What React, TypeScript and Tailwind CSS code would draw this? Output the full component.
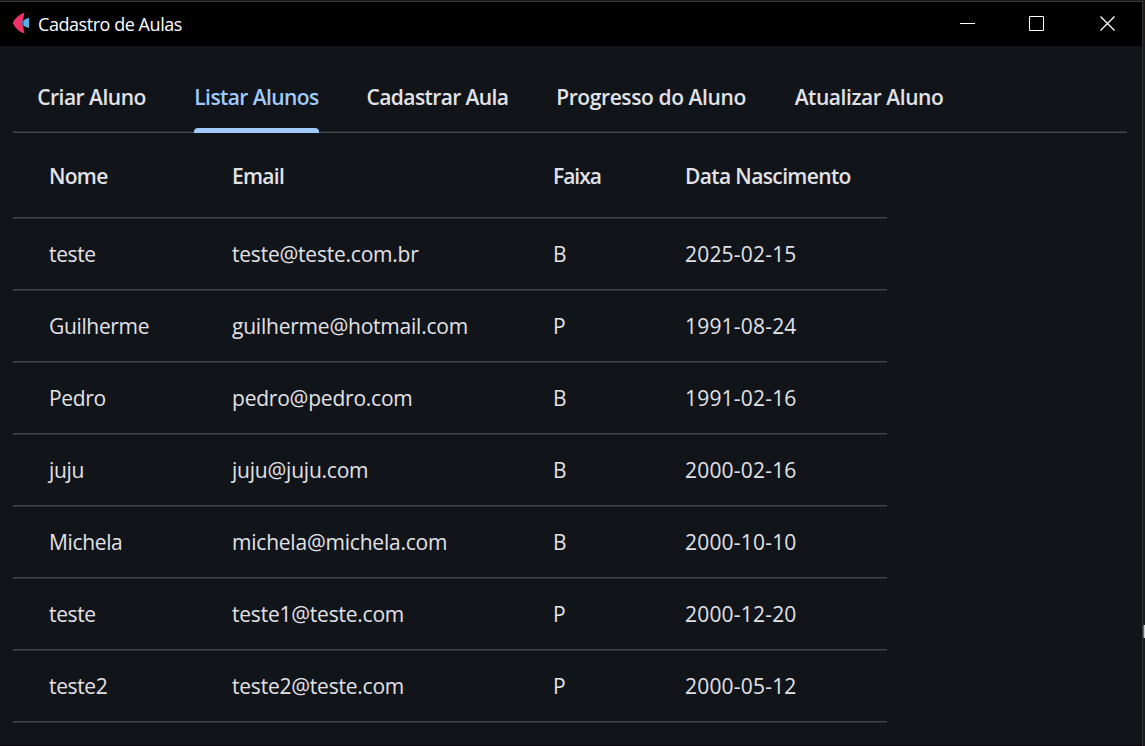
const tabs = [
  { label: 'Criar Aluno', size: 'w-[109px] tracking-[-0.5px]', active: false },
  { label: 'Listar Alunos', size: 'w-[125px] tracking-[-0.58px]', active: true },
  { label: 'Cadastrar Aula', size: 'w-[141px] tracking-[-0.6px]', active: false },
  { label: 'Progresso do Aluno', size: 'w-[190px] tracking-[-0.4px]', active: false },
  { label: 'Atualizar Aluno', size: 'w-[150px] tracking-[-0.45px]', active: false },
];

const headings = [
  { label: 'Nome', tracking: 'tracking-[-0.7px]' },
  { label: 'Email', tracking: 'tracking-[-0.7px]' },
  { label: 'Faixa', tracking: 'tracking-[-1px]' },
  { label: 'Data Nascimento', tracking: 'tracking-[-0.63px]' },
];

const columnTracking = ['tracking-[-0.35px]', 'tracking-[-0.22px]', 'tracking-normal', 'tracking-[0.2px]'];

const rows = [
  ['teste', 'teste@teste.com.br', 'B', '2025-02-15'],
  ['Guilherme', 'guilherme@hotmail.com', 'P', '1991-08-24'],
  ['Pedro', 'pedro@pedro.com', 'B', '1991-02-16'],
  ['juju', 'juju@juju.com', 'B', '2000-02-16'],
  ['Michela', 'michela@michela.com', 'B', '2000-10-10'],
  ['teste', 'teste1@teste.com', 'P', '2000-12-20'],
  ['teste2', 'teste2@teste.com', 'P', '2000-05-12'],
];

function TitleBar() {
  return (
    <header className="flex h-11 shrink-0 items-center bg-black pl-3">
      <svg width="18" height="22" viewBox="0 0 18 22" className="-mt-0.5">
        <path d="M12.600 0.400C7 2.400 3 6 0.600 10.900C3 16 7 19.600 12.600 21.600C11.800 18.500 11.400 15.500 10.800 13.200L9 11L10.800 8.800C11.400 6.500 11.800 3.500 12.600 0.400Z" fill="#ee3167" />
        <path d="M9 11C11 8.500 13.500 6.500 17 5.700V16.100C13.500 15.400 11 13.500 9 11Z" fill="#55b2e2" />
        <path d="M9 11L12 8.200V13.800Z" fill="#3c78b8" />
      </svg>
      <h1 className="ml-2 whitespace-nowrap text-[18px] leading-6 tracking-[-0.45px] text-white">Cadastro de Aulas</h1>
      <div className="ml-auto flex items-center pr-[26px]">
        <svg width="156" height="16" viewBox="0 0 156 16" fill="none" stroke="white">
          <path d="M0 7.500H15" />
          <path d="M69.500 0.500H83.500V14.500H69.500Z" />
          <path d="M140.500 0.500L154.500 14.500M154.500 0.500L140.500 14.500" strokeWidth="1.300" />
        </svg>
      </div>
    </header>
  );
}

export default function App() {
  return (
    <div className="flex h-[746px] w-[1145px] overflow-hidden bg-[#1b1a19] font-['Open_Sans','Noto_Sans',sans-serif]">
      <div className="flex h-full w-[1143px] flex-col border-r border-[#373534] pt-px">
        <div className="h-px shrink-0 bg-[#373737]" />
        <TitleBar />
        <main className="flex-1 border-b border-[#08060c] bg-[#111418] pl-[13px] pr-[15px] text-[#e1e2e8]">
          <nav className="flex h-[87px] gap-12 pl-6 shadow-[inset_0_-1px_#42474e,inset_0_-2px_#2a2e33]">
            {tabs.map((tab) => (
              <div
                key={tab.label}
                className={`${tab.size} relative flex items-center justify-center pt-4 whitespace-nowrap text-[21px] font-semibold ${tab.active ? 'text-[#a0cafd]' : ''}`}
              >
                {tab.label}
                {tab.active && <span className="absolute inset-x-0 bottom-0 h-[5px] rounded-t-[4px] bg-[#a0cafd]" />}
              </div>
            ))}
          </nav>
          <table className="w-[874px] table-fixed border-collapse text-left text-[21px]">
            <colgroup>
              <col className="w-[219px]" />
              <col className="w-[321px]" />
              <col className="w-[132px]" />
              <col className="w-[202px]" />
            </colgroup>
            <thead>
              <tr className="h-[86px]">
                {headings.map(({ label, tracking }) => (
                  <th key={label} className={`${tracking} whitespace-nowrap p-0 pt-0.5 font-semibold shadow-[inset_0_-1px_#2a2e33,inset_0_-2px_#42474e] first:pl-9`}>{label}</th>
                ))}
              </tr>
            </thead>
            <tbody>
              {rows.map((row) => (
                <tr key={row[1]} className="h-[72px]">
                  {row.map((value, index) => (
                    <td key={index} className={`${columnTracking[index]} whitespace-nowrap p-0 shadow-[inset_0_-1px_#2a2e33,inset_0_-2px_#42474e] first:pl-9`}>{value}</td>
                  ))}
                </tr>
              ))}
            </tbody>
          </table>
        </main>
      </div>
      <div className="flex w-0.5 flex-col pt-[625px]">
        <span className="h-[13px] w-0.5 border-l border-[#1685b5] bg-[#c9d0c9]" />
      </div>
    </div>
  );
}
